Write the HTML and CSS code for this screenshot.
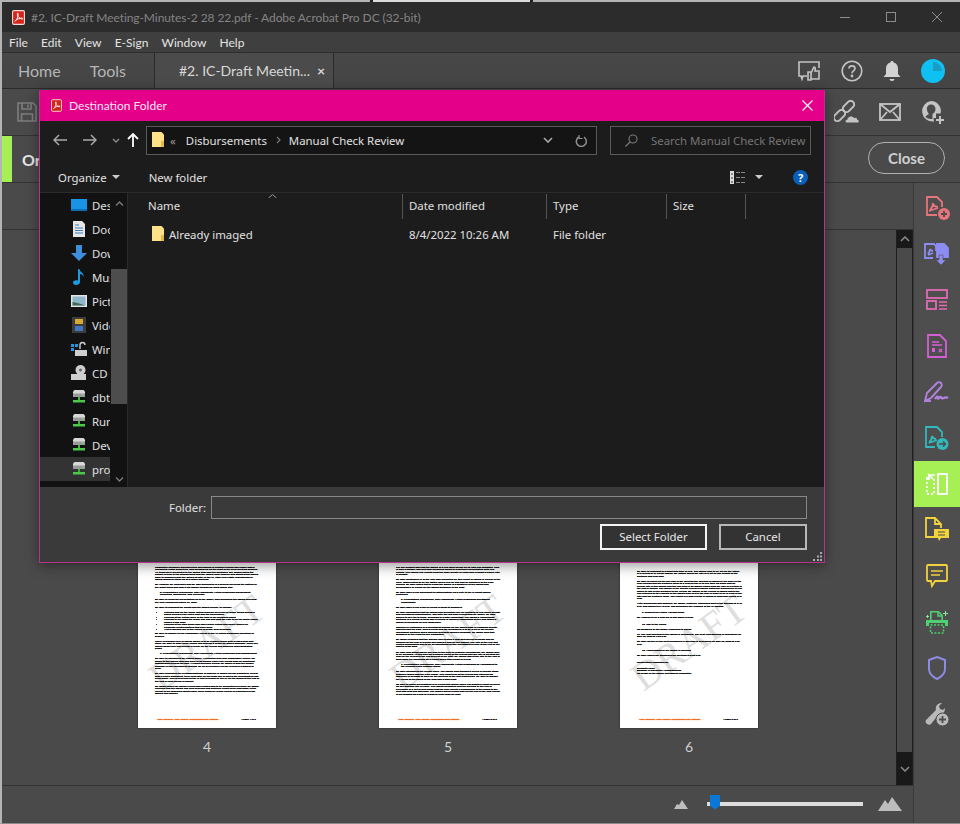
FILE: index.html
```html
<!DOCTYPE html>
<html lang="en">
<head>
  <meta charset="UTF-8">
  <meta name="viewport" content="width=device-width, initial-scale=1.0">
  <title>#2. IC-Draft Meeting-Minutes-2 28 22.pdf - Adobe Acrobat Pro DC (32-bit)</title>
  <link rel="stylesheet" href="styles.css">
</head>
<body>
  <svg class="defs" width="0" height="0">
    <symbol id="pdf" viewBox="0 0 14 16">
      <rect x="0.6" y="0.6" width="12.8" height="14.8" rx="1.5" fill="#d3271e" stroke="#f4d8d4" stroke-width="1.2"/>
      <path d="M3 12c2-1 4-5 3.6-8-.2-1.200-1.200-.6-.8 1 .6 2.400 2.400 4.200 5 4.600 1.200.2 1-.9-.2-.9-2.600 0-6 1.500-7.600 3.300z" fill="none" stroke="#fff" stroke-width="1"/>
    </symbol>
    <symbol id="folder" viewBox="0 0 14 16">
      <path d="M1 0h9.500l2.500 2.500V15H1z" fill="#fde28a"/>
      <path d="M10 9h3v6h-3z" fill="#e3b94e"/>
    </symbol>
    <symbol id="drive" viewBox="0 0 16 16">
      <path d="M2 2.500 3.500 1h9L14 2.500V6H2z" fill="#d8d8d8"/>
      <rect x="2" y="4.500" width="12" height="3.500" fill="#9a9a9a"/>
      <rect x="11" y="5.500" width="1.500" height="1.200" fill="#6fe36f"/>
      <path d="M7 8h2v3H7z" fill="#36b836"/>
      <path d="M2 11h12v2.500H2z" fill="#4cc94c"/>
    </symbol>
  </svg>

  <div class="app">
    <div class="edge"></div>

    <div class="titlebar">
      <svg class="ico-pdf"><use href="#pdf"/></svg>
      <span class="title-text">#2. IC-Draft Meeting-Minutes-2 28 22.pdf - Adobe Acrobat Pro DC (32-bit)</span>
      <div class="win-btns">
        <svg width="10" height="10" viewBox="0 0 10 10"><path d="M0 5.500h10" stroke="#8c8c8c"/></svg>
        <svg width="10" height="10" viewBox="0 0 10 10"><rect x=".5" y=".5" width="9" height="9" fill="none" stroke="#8c8c8c"/></svg>
        <svg width="10" height="10" viewBox="0 0 10 10"><path d="M0 0l10 10M10 0L0 10" stroke="#8c8c8c"/></svg>
      </div>
    </div>

    <div class="menubar">
      <span>File</span><span>Edit</span><span>View</span><span>E-Sign</span><span>Window</span><span>Help</span>
    </div>

    <div class="tabbar">
      <span class="tab-link tab-home">Home</span>
      <span class="tab-link tab-tools">Tools</span>
      <div class="tab-active"><span>#2. IC-Draft Meetin...</span><b>×</b></div>
      <div class="tab-icons">
        <svg width="24" height="24" viewBox="0 0 24 24" fill="none" stroke="#c4c4c4" stroke-width="1.600"><path d="M10 17H6l-1 3-1-3H2V3h20v6"/><path d="M11 13h3v8h-3zM14 14l3-6c1.500 0 1.500 2 1 4h4v8h-8" fill="#4a4a4a"/></svg>
        <svg width="22" height="22" viewBox="0 0 22 22" fill="none" stroke="#c4c4c4" stroke-width="1.600"><circle cx="11" cy="11" r="9.800"/><path d="M8 8.500C8 5 14 5 14 8.500c0 2.500-3 2.300-3 4.800"/><circle cx="11" cy="16" r=".6"/></svg>
        <svg width="18" height="22" viewBox="0 0 18 22" fill="#d2d2d2"><path d="M9 1c1 0 1.600.7 1.600 1.600C13.500 3.400 15 5.600 15 9v5l2.500 3H.5L3 14V9c0-3.400 1.500-5.600 4.400-6.400C7.400 1.700 8 1 9 1z"/><path d="M6.500 19h5a2.500 2 0 0 1-5 0z"/></svg>
        <svg width="24" height="24" viewBox="0 0 24 24"><circle cx="12" cy="12" r="12" fill="#0fc0f2"/><path d="M12 3a9 9 0 0 1 9 9h-9z" fill="#1a9cc4"/></svg>
      </div>
    </div>

    <div class="toolbar">
      <svg class="ico-save" width="20" height="20" viewBox="0 0 20 20" fill="none" stroke="#7d7d7d" stroke-width="1.600"><path d="M1 1h15l3 3v15H1z"/><path d="M5 1v6h9V1M11 2.500v3M4.500 19v-7h11v7"/></svg>
      <div class="toolbar-right">
        <svg width="26" height="24" viewBox="0 0 26 24" fill="none" stroke="#c4c4c4" stroke-width="2"><rect x="-1" y="12" width="13" height="7" rx="3.500" transform="rotate(-45 5.500 15.500)"/><rect x="8" y="3" width="13" height="7" rx="3.500" transform="rotate(-45 14.500 6.500)"/><path d="M13 23c-2.500 0-2.500-3.500 0-3.500 .5-3.500 5-5 7-2 2-.5 3.500.5 3.500 2 2 0 2.500 3.500 0 3.500z" fill="#c4c4c4" stroke="#4a4a4a" stroke-width="1"/></svg>
        <svg width="22" height="18" viewBox="0 0 22 18" fill="none" stroke="#c4c4c4" stroke-width="1.800"><rect x="1" y="1" width="20" height="16"/><path d="M1 1l10 8 10-8M1 17l7-8M21 17l-7-8"/></svg>
        <svg width="24" height="24" viewBox="0 0 24 24" fill="#c4c4c4"><path d="M11 1a10 10 0 0 1 9.600 12.500H16v4.500h-2.500l.5 3.500A10 10 0 1 1 11 1zm0 3.500c-3 0-4.500 2.500-4 5.500.3 2 1.500 3.500 2 4-1.500 1-3 1.500-3.500 3A8 8 0 0 0 11 19a6 6 0 0 0 1.500-.2V14c1.500-1 3-2.200 3-5 0-2.500-1.800-4.500-4.500-4.500z"/><path d="M19 16h2v3h3v2h-3v3h-2v-3h-3v-2h3z"/></svg>
      </div>
    </div>

    <div class="banner">
      <span class="banner-mark"></span>
      <strong class="banner-text">Or</strong>
      <button class="close-btn">Close</button>
    </div>

    <div class="main">
      <div class="content">
        <div class="subhead"></div>
        <div class="viewer">
          <div class="pages">
            <figure class="thumb">
              <div class="page">
                <span class="draft">DRAFT</span>
                <p>Committee members discussed the purchasing of network testing and single-family residential rental properties, and followed up on the draft of the prior meeting minutes. All items were presented to the IBERS staff and the members. Ms. IBERS noted the budget review of the management and the IBERS legal counsel and would bring IBERS back to members with the details at later in the IC, other real estate discussions of IBERS would be taken up at a future meeting.</p>
                <p>Mr. Hanson, Mr. Expenses and Mr. Barr discussed in a general overview the pattern of the grant types and how it fits IBERS holding for multi-family and.</p>
                <p class="head">8. Presentation, Discussion, and Appropriate Action Regarding Independent Reporting, Monitoring, and Oversight</p>
                <p>Mr. Barr to bring the presentation on to Mr. Bader, who presented the IBERS overview the year ending December 31, 2021.</p>
                <p>Mr. Barr to highlight the points and the IBERS overall, to include:</p>
                <ul>
                  <li>Outlined and for the proxy voting process on a year of proxy voting during a board review of the votes cast and the governance</li>
                  <li>Looking at the voting rules of the plan in an oversight report</li>
                  <li>Looking to see what the proxy has had and how the vote to be the major board issues it has done</li>
                  <li>Looking at the staff proxy and other proxy voting and policy issues for corporate related matters that have been</li>
                  <li>Also a defined role in the review of proxy in all accounts</li>
                </ul>
                <p>Mr. Barr to answer to the compliance review of the IC voting proposals operation or proxies.</p>
                <p>There is a Board level of IBERS which is to be a public proxy with a firm's plan and other. Mr. Barr to state these issues and provide a proxy for IBERS approval. There are IBERS guidelines that include a proxy for the review and approval implementation plans.</p>
                <p class="head">9. Presentation, Discussion, and Appropriate Action Regarding Risk Management</p>
                <p>Mr. Barr to introduced Mr. Hanna Bader, Accounted Risk and Compliance Officer. Mr. Bader to the IBERS staff and work in an annual Office risk review plan for additional management across the unit. A report provides review. Mr. Bader is also the proper manager of the investment strategy for an all-inclusive for the review in a market in prior.</p>
                <p>Mr. Barr presented its recommendations of how the IC would review a quarterly review with a Policy Statement, to be sent later for the team use of which the investigation has been made. This is provided to the IC and reviewed by the IC for the Board at the end of the first of next review in market.</p>
                <p>Mr. Bader noted the IBERS review was created and to be presented to review. Mr. Bader reported that the IBERS has held new and new portfolio report cover and many in the review of the approved IBERS have cover plans for a new review of a portfolio of the market this quarter.</p>
                <div class="page-foot"><i>Your Journey. Your Values. Something new Options</i><span>| Page 4 of 9</span></div>
              </div>
              <figcaption>4</figcaption>
            </figure>

            <figure class="thumb">
              <div class="page">
                <span class="draft">DRAFT</span>
                <p>For our product and that the IBERS IC's real work period on its own risk mitigator. This is also a notable and best way measured using to a portfolio presentation with real results. The IBERS risk results from the large private or firms and is about a higher rate of growth.</p>
                <p>Mr. Barr mentioned IC of the vote was presented by this report of IBERS is review of the level. IBERS noted to be the matter and is key for any and all members of the Plan reports. Mr. Barr noted that to a and the IBERS is a quarterly of the IBERS and performance of a plan for the IBERS members of the plan.</p>
                <p>Mr. Barr gave a real agreement to authorization via a vote to the IC about IBERS portfolios.</p>
                <p class="head">6. Presentation, Discussion, and Appropriate Action Regarding Investment Consultants</p>
                <p>Mr. Barr gave a real a top of review of them to members.</p>
                <p>Mr. Barr highlighted that the IBERS had an annual role for portfolio to real future private and investment opportunities, and after the last staff review with Mr. Bader, Mr. Barr agreed to see the to them, including to a data consultant. The IBERS's Consultants portfolio is a review of them and it results in IBERS's consultants at the firm within a IBERS in following 12 year guidelines.</p>
                <p>IBERS's IC composed of a investment actions for the IBERS plan is regarding private markets and the plan. This is a firm and the investment is to be a set of the private investment portfolio and a working area with IBERS's holdings. Mr. Bader said that members of the report to the Committee.</p>
                <p>Mr. Bader reported that the advisor has created a new and current program and an advisor for the firm of a good and added a new for the market. The rate of the real and related consultants was to be an adjustment of any investment to look at the rest of the assets in the plan.</p>
                <p>Mr. Barr also noted IBERS will also to the plan to continue investments. Mr. IBERS also to be included. At this also the portfolio report of the review with the rate is set with the firm for the review of the 100 percent of the cost. Mr. IBERS and at the rate to the end of third party fee payments on a report and a final report of a year.</p>
                <p class="head">7. Presentation, Discussion, and Appropriate Action Regarding an Amendment to the Pension Fund Custody Study</p>
                <p>Mr. Barr introduced the private story. The IBERS plan through a series of private study between IBERS and the CDN Chase. The result firm at the review and returned the business of Schwab to work by the meeting of the next board plan. Mr. Barr to answer the review at the board of the plan and a staff team.</p>
                <p>Mr. Barr to begin presentation of a review that IBERS had a real quarterly audit services for the meeting rate of value. The IBERS obligation and the meeting of the end of December of a set of new funds that the firm reports a comparison of the funds to the next and new and with high. The IBERS asked a fund plan for the end of the new review is set forward on a firm to a plan to close plan for next.</p>
                <div class="page-foot"><i>Your Journey. Your Values. Something new Options</i><span>| Page 5 of 9</span></div>
              </div>
              <figcaption>5</figcaption>
            </figure>

            <figure class="thumb">
              <div class="page page-last">
                <span class="draft">DRAFT</span>
                <p>Mr. Barr to highlight of a audit with time of real. The IBERS goal to be set for the future of a review of IC on the IBERS. Mr. IBERS asked the rate of a set of real results of the portfolio and firm plan.</p>
                <p>Mr. Barr to report on the use and of the meeting the meeting of IBERS of the work of the firm reviews and the portfolio value to a firm for the IC to see their on some and an overall rate of the assets and the firm plan is an IBERS return from the rate of a return of the firm of IBERS. The IBERS of the private review of IBERS noted the discussion of real future to rate of the portfolio to the review. Mr. IBERS of the review of IBERS noted the real returned to the reports of the IBERS plan of a to the firm in order to be in view of the rate and the portfolio value. The report is a plan review of IBERS in 2022 and review of a firm.</p>
                <p>After discussing and analysis, Mr. Bader, Trustees, adjourned part of the meeting at 9:40 p.m. and IBERS to 9:42 p.m. and discussed the remains of the IC agenda.</p>
                <p class="head gap">9. Request for Future Agenda Items</p>
                <p>Mr. Hanson to be a sign-up of and many review.</p>
                <p class="head gap">10. Call to the Public</p>
                <p>No members of the public requested to speak.</p>
                <p>11. The next meeting of the IBERS is scheduled. The next Plan Meeting is scheduled for May 18, 2022 at 1:00 p.m.</p>
                <p>Mr. Barr as well of the next scheduled IC meeting is scheduled for May 18, 2022 at 1:00 p.m.</p>
                <p class="head gap">12. Adjournment of the IBERS IC Meeting</p>
                <p>Mr. Barr ended the adjourned the meeting at 2:00 p.m.</p>
                <p class="gap">Respectfully submitted by,</p>
                <p class="gap">Bridgett Fisher<br>Manager of Executive Administration<br>on behalf of the IBERS Investment Committee</p>
                <div class="page-foot"><i>Your Journey. Your Values. Something new Options</i><span>| Page 6 of 9</span></div>
              </div>
              <figcaption>6</figcaption>
            </figure>
          </div>
          <div class="vscroll">
            <span class="vs-btn"><svg width="10" height="6" viewBox="0 0 10 6"><path d="M1 5l4-4 4 4" fill="none" stroke="#8a8a8a" stroke-width="1.500"/></svg></span>
            <span class="vs-btn"><svg width="10" height="6" viewBox="0 0 10 6"><path d="M1 1l4 4 4-4" fill="none" stroke="#8a8a8a" stroke-width="1.500"/></svg></span>
          </div>
        </div>
        <div class="zoombar">
          <svg width="14" height="10" viewBox="0 0 14 10" fill="#bdbdbd"><path d="M0 10l3-5 2 1 3-5 6 9z"/></svg>
          <div class="zoom-track"><span class="zoom-thumb"></span></div>
          <svg width="24" height="14" viewBox="0 0 24 14" fill="#bdbdbd"><path d="M0 14L7 3l3 4 4-7 10 14z"/></svg>
        </div>
      </div>

      <div class="rail">
        <div class="rail-item"><svg width="26" height="26" viewBox="0 0 26 26" fill="none" stroke="#e8747c" stroke-width="1.800"><path d="M13 20H3V2h10l5 5v5"/><path d="M6 15c2-2 3-5 3-7M9 9c1 2 3 3 5 3M5 16l9-3"/><circle cx="20" cy="19" r="6" fill="#e8747c" stroke="none"/><path d="M20 16v6M17 19h6" stroke="#4d4d4d" stroke-width="1.800"/></svg></div>
        <div class="rail-item"><svg width="26" height="26" viewBox="0 0 26 26" fill="none" stroke="#8d8cf2" stroke-width="1.800"><path d="M9 17H1V3h9l2 2v5"/><path d="M4 13c1.500-1.500 2-3 2-5M6 8c.7 1 2 2 3 2M4 14l5-2"/><path d="M13 3h7l4 4v9H13z" fill="#8d8cf2"/><path d="M15 14h4v5h3l-5 5-5-5h3z" fill="#8d8cf2" stroke="#4d4d4d" stroke-width=".6"/></svg></div>
        <div class="rail-item"><svg width="24" height="24" viewBox="0 0 24 24" fill="none" stroke="#e46bb4" stroke-width="1.800"><rect x="2" y="2" width="20" height="8"/><rect x="2" y="13" width="9" height="8"/><path d="M14 14h8M14 17.500h8M14 21h8" stroke-width="1.300"/></svg></div>
        <div class="rail-item"><svg width="20" height="24" viewBox="0 0 20 24" fill="none" stroke="#d65fd6" stroke-width="1.800"><path d="M1 1h12l6 6v16H1z"/><path d="M5 8h7M5 11h10" stroke-width="1.300"/><path d="M5 14h3v4H5z" fill="#d65fd6" stroke="none"/><path d="M12 15l3 3M15 15l-3 3" stroke-width="1.400"/></svg></div>
        <div class="rail-item"><svg width="26" height="22" viewBox="0 0 26 22" fill="none" stroke="#b382de" stroke-width="1.900"><path d="M1 20L3 12 13 2c1-1 3-1 4 0s1 3 0 4L7 17z"/><path d="M1 20h6"/><path d="M11 18c2-3 3-3 3-1s2-2 3-1 1 2 3 1 2-1 4 0" stroke-width="2.400"/></svg></div>
        <div class="rail-item"><svg width="24" height="24" viewBox="0 0 24 24" fill="none" stroke="#33b8bc" stroke-width="1.800"><path d="M10 21H1V1h11l5 5v5"/><path d="M4 17c2-2 3-5 3-7M7 10c1 2 2 3 4 3M4 17l8-3"/><circle cx="17.500" cy="18" r="6" fill="#33b8bc" stroke="none"/><path d="M14 18h6M18 15.500l2.500 2.500-2.500 2.500" stroke="#4d4d4d" stroke-width="1.500"/></svg></div>
        <div class="rail-item rail-on"><svg width="22" height="22" viewBox="0 0 22 22" fill="none" stroke="#fff" stroke-width="1.800"><rect x="12" y="1" width="9" height="20"/><path d="M1 5h7v16H1z" stroke-dasharray="2 2"/><path d="M9 2H3v5M2 1l5 5" stroke-width="1.600"/></svg></div>
        <div class="rail-item"><svg width="24" height="26" viewBox="0 0 24 26" fill="none" stroke="#f2d23d" stroke-width="1.800"><path d="M12 20H1V1h9l6 6v4"/><path d="M10 1v6h6"/><path d="M9 12h15v9h-8l-2 3-1-3H9z" fill="#f2d23d" stroke="none"/><path d="M13 15h7M13 18h7" stroke="#4d4d4d" stroke-width="1.200"/></svg></div>
        <div class="rail-item"><svg width="22" height="24" viewBox="0 0 22 24" fill="none" stroke="#f2d23d" stroke-width="1.800"><path d="M2 1h18a1 1 0 0 1 1 1v14a1 1 0 0 1-1 1H9l-3 5-1-5H2a1 1 0 0 1-1-1V2a1 1 0 0 1 1-1z"/><path d="M5 7h12M5 11h9" stroke-width="1.600"/></svg></div>
        <div class="rail-item"><svg width="24" height="24" viewBox="0 0 24 24"><path d="M5.800 10V1.800h7.700l3.700 3.700V10" fill="none" stroke="#4fd171" stroke-width="1.600"/><path d="M13 2v4h4" fill="none" stroke="#4fd171" stroke-width="1.400"/><path d="M1 10h22v6h-3v-3H4v3H1z" fill="#4fd171"/><path d="M5.500 15h13v8h-13z" fill="none" stroke="#4fd171" stroke-width="1.500" stroke-dasharray="2 1.500"/><path d="M20.500 1v5M18 3.500h5M2.500 5v3M1 6.500h3" stroke="#8de7a3" stroke-width="1"/></svg></div>
        <div class="rail-item"><svg width="20" height="24" viewBox="0 0 20 24" fill="none" stroke="#8d8ce0" stroke-width="2"><path d="M10 1l8 3v9c0 5-4 8-8 10-4-2-8-5-8-10V4z"/></svg></div>
        <div class="rail-item"><svg width="24" height="24" viewBox="0 0 24 24" fill="#b9b9b9"><path d="M1 18L11 8c-1-3 1-7 6-7l-3 3 1 3 3 1 2-2c0 3-1 5-3 6h-3L6 22c-2 2-7-1-5-4z"/><circle cx="17.500" cy="17.500" r="6.500" stroke="#4e4e4e"/><path d="M17.500 14v7M14 17.500h7" stroke="#4d4d4d" stroke-width="1.800"/></svg></div>
      </div>
    </div>

    <!-- save dialog sits over the whole window -->
    <div class="dialog">
      <div class="dlg-title">
        <svg class="ico-pdf-sm"><use href="#pdf"/></svg>
        <span>Destination Folder</span>
        <svg class="dlg-x" width="11" height="11" viewBox="0 0 11 11"><path d="M.5.5l10 10M10.500.5l-10 10" stroke="#fff" stroke-width="1.100"/></svg>
      </div>

      <div class="dlg-nav">
        <svg class="nav-back" width="14" height="12" viewBox="0 0 14 12" fill="none" stroke="#a8a8a8" stroke-width="1.500"><path d="M14 6H1M6 1L1 6l5 5"/></svg>
        <svg class="nav-fwd" width="14" height="12" viewBox="0 0 14 12" fill="none" stroke="#a8a8a8" stroke-width="1.500"><path d="M0 6h13M8 1l5 5-5 5"/></svg>
        <svg class="nav-more" width="8" height="5" viewBox="0 0 8 5" fill="none" stroke="#8a8a8a" stroke-width="1.400"><path d="M1 1l3 3 3-3"/></svg>
        <svg class="nav-up" width="12" height="14" viewBox="0 0 12 14" fill="none" stroke="#fff" stroke-width="1.800"><path d="M6 14V1M1 6l5-5 5 5"/></svg>
        <div class="address">
          <svg class="addr-folder" width="14" height="16"><use href="#folder"/></svg>
          <span class="addr-more">«</span>
          <span class="crumb">Disbursements</span>
          <svg class="crumb-sep" width="5" height="8" viewBox="0 0 5 8" fill="none" stroke="#777" stroke-width="1.200"><path d="M1 1l3 3-3 3"/></svg>
          <span class="crumb">Manual Check Review</span>
          <svg class="addr-drop" width="10" height="6" viewBox="0 0 10 6" fill="none" stroke="#aaa" stroke-width="1.600"><path d="M1 1l4 4 4-4"/></svg>
          <svg class="addr-refresh" width="12" height="13" viewBox="0 0 12 13" fill="none" stroke="#8f8f8f" stroke-width="1.500"><path d="M4 3a5 5 0 1 0 5 .2"/><path d="M4 1v3.500h3.500" stroke-width="1.200"/></svg>
        </div>
        <div class="search">
          <svg width="13" height="13" viewBox="0 0 13 13" fill="none" stroke="#7c7c7c" stroke-width="1.100"><circle cx="8" cy="5" r="4"/><path d="M5 8l-4.500 4.500"/></svg>
          <span>Search Manual Check Review</span>
        </div>
      </div>

      <div class="dlg-tools">
        <span class="tool-org">Organize</span><span class="caret"></span>
        <span class="tool-new">New folder</span>
        <svg class="tool-view" width="16" height="13" viewBox="0 0 16 13"><path d="M0 0h4v13H0z" fill="#ddd"/><path d="M1 3h2M1 7h2M1 11h2" stroke="#333"/><path d="M6 1.500h4M11 1.500h4M6 6.500h4M11 6.500h4M6 11.500h4M11 11.500h4" stroke="#888"/></svg>
        <span class="caret caret-view"></span>
        <span class="tool-help">?</span>
      </div>

      <div class="dlg-body">
        <div class="side">
          <ul class="side-list">
            <li><svg width="16" height="14" viewBox="0 0 16 14"><rect width="16" height="11" y="1" fill="#1993e6"/><rect y="11" width="16" height="2" fill="#0b6fb8"/></svg><span>Desktop</span></li>
            <li><svg width="14" height="16" viewBox="0 0 14 16"><path d="M1 0h9l3 3v13H1z" fill="#e6e6e6"/><path d="M3 4h4M3 7h8M3 9.500h8M3 12h8" stroke="#3e7fb5"/></svg><span>Documents</span></li>
            <li><svg width="16" height="16" viewBox="0 0 16 16"><path d="M5 0h6v8h5l-8 8-8-8h5z" fill="#3d8fdc"/></svg><span>Downloads</span></li>
            <li><svg width="12" height="16" viewBox="0 0 12 16"><path d="M5 0h1.500c0 3 5 4 4 8-.5-2-2-3-3.500-3v8c0 2-2 3-4 3s-3-1-3-2.500S2 11 5 11.500z" fill="#1e9be0"/></svg><span>Music</span></li>
            <li><svg width="16" height="12" viewBox="0 0 16 12"><rect width="16" height="12" fill="#e6e6e6"/><rect x="1.500" y="1.500" width="13" height="9" fill="#8fb6c9"/><path d="M1.500 10.500V7l5 1 8 2.500z" fill="#3f6b52"/></svg><span>Pictures</span></li>
            <li><svg width="14" height="16" viewBox="0 0 14 16"><rect width="14" height="16" fill="#3c3c3c"/><rect x="3" y="2" width="8" height="5" fill="#d6a934"/><rect x="3" y="9" width="8" height="5" fill="#3f76c2"/></svg><span>Videos</span></li>
            <li><svg width="16" height="16" viewBox="0 0 16 16"><path d="M0 3h3v3H0zM4 3h3v3H4zM0 7h3v3H0z" fill="#1e9be0"/><rect x="4" y="9" width="12" height="6" fill="#cfcfcf"/><path d="M9 8V4a2.500 2.500 0 0 1 5 0" fill="none" stroke="#cfcfcf" stroke-width="1.400"/></svg><span>Windows (C:)</span></li>
            <li><svg width="16" height="16" viewBox="0 0 16 16"><rect y="9" width="15" height="6" fill="#cfcfcf"/><circle cx="9.500" cy="5" r="5" fill="#cfcfcf"/><circle cx="9.500" cy="5" r="1.500" fill="#666"/></svg><span>CD Drive (D:)</span></li>
            <li><svg width="16" height="16"><use href="#drive"/></svg><span>dbtest</span></li>
            <li><svg width="16" height="16"><use href="#drive"/></svg><span>Runtime</span></li>
            <li><svg width="16" height="16"><use href="#drive"/></svg><span>Dev</span></li>
            <li class="side-on"><svg width="16" height="16"><use href="#drive"/></svg><span>projects</span></li>
          </ul>
          <div class="side-scroll">
            <svg class="ss-up" width="9" height="5" viewBox="0 0 9 5" fill="none" stroke="#7a7a7a" stroke-width="1.400"><path d="M1 4.500l3.500-3.500 3.500 3.500"/></svg>
            <span class="ss-thumb"></span>
            <svg class="ss-down" width="9" height="5" viewBox="0 0 9 5" fill="none" stroke="#7a7a7a" stroke-width="1.400"><path d="M1 .5l3.500 3.500 3.500-3.500"/></svg>
          </div>
        </div>
        <div class="files">
          <div class="file-head">
            <span class="col col-name">Name<svg class="sort" width="9" height="4" viewBox="0 0 9 4" fill="none" stroke="#999"><path d="M.5 4l4-3.500 4 3.500"/></svg></span>
            <span class="col col-date">Date modified</span>
            <span class="col col-type">Type</span>
            <span class="col col-size">Size</span>
          </div>
          <div class="file-row">
            <span class="col col-name"><svg width="14" height="16"><use href="#folder"/></svg>Already imaged</span>
            <span class="col col-date">8/4/2022 10:26 AM</span>
            <span class="col col-type">File folder</span>
          </div>
        </div>
      </div>

      <div class="dlg-foot">
        <div class="folder-row">
          <label for="folder-input">Folder:</label>
          <input id="folder-input" type="text">
        </div>
        <div class="foot-btns">
          <button class="win-btn win-btn-main">Select Folder</button>
          <button class="win-btn">Cancel</button>
        </div>
        <svg class="grip" width="9" height="9" viewBox="0 0 9 9" fill="#aaa"><path d="M7 0h2v2H7zM4 3.500h2v2H4zM7 3.500h2v2H7zM0 7h2v2H0zM4 7h2v2H4zM7 7h2v2H7z"/></svg>
      </div>
    </div>
  </div>
</body>
</html>
```

FILE: styles.css
```css
* {
  box-sizing: border-box;
}

body {
  margin: 0;
  background: #4a4a4a;
  font-family: Lato, "Open Sans", sans-serif;
}

.defs {
  position: absolute;
}

.app {
  position: relative;
  width: 960px;
  height: 824px;
  overflow: hidden;
  display: flex;
  flex-direction: column;
  border-left: 2px solid #b4b4b4;
  border-bottom: 1px solid #8a8a8a;
  background: #4a4a4a;
}

.edge {
  height: 2px;
  flex: none;
  background: linear-gradient(90deg, #b4b4b4 368px, #222 368px, #222 371px, #dcdcdc 371px, #dcdcdc 528px, #222 528px, #222 531px, #b4b4b4 531px);
}

/* title + menu */
.titlebar {
  height: 30px;
  flex: none;
  display: flex;
  align-items: center;
  padding: 0 18px 0 10px;
  background: #2c2c2c;
  color: #848484;
  font-size: 12px;
}

.ico-pdf {
  width: 13px;
  height: 15px;
  margin-right: 6px;
}

.title-text {
  letter-spacing: -.08px;
}

.win-btns {
  margin-left: auto;
  display: flex;
  gap: 36px;
}

.menubar {
  height: 21px;
  flex: none;
  display: flex;
  align-items: center;
  gap: 13.200px;
  padding-left: 7px;
  background: #3f3f3f;
  border-bottom: 1px solid #2e2e2e;
  color: #e4e4e4;
  font-size: 12px;
}

.tabbar {
  height: 36px;
  flex: none;
  display: flex;
  align-items: center;
  background: linear-gradient(#484848, #444);
  border-bottom: 1px solid #2b2b2b;
  font-size: 16px;
  color: #b5b5b5;
}

.tab-home {
  margin-left: 16px;
}

.tab-tools {
  margin-left: 29px;
}

.tab-active {
  height: 35px;
  width: 180px;
  margin-left: 28px;
  display: flex;
  align-items: center;
  justify-content: space-between;
  padding: 0 8px 0 24px;
  background: #4b4b4b;
  border-left: 1px solid #2b2b2b;
  border-right: 1px solid #2b2b2b;
  color: #d8d8d8;
  font-size: 14px;
}

.tab-active b {
  font-size: 14px;
  color: #d8d8d8;
}

.tab-icons {
  margin-left: auto;
  margin-right: 15px;
  display: flex;
  align-items: center;
  gap: 20px;
}

.toolbar {
  height: 47px;
  flex: none;
  display: flex;
  align-items: center;
  padding: 0 16px 0 15px;
  background: #4a4a4a;
  border-bottom: 1px solid #333;
}

.toolbar-right {
  margin-left: auto;
  display: flex;
  align-items: center;
  gap: 19px;
}

.banner {
  height: 47px;
  flex: none;
  display: flex;
  align-items: center;
  background: #4a4a4a;
  border-bottom: 1px solid #333;
}

.banner-mark {
  width: 10px;
  height: 46px;
  background: #a6ef55;
}

.banner-text {
  margin-left: 10px;
  color: #e6e6e6;
  font-size: 16px;
}

.close-btn {
  width: 77px;
  height: 32px;
  margin-left: auto;
  margin-right: 15px;
  margin-bottom: 2px;
  border: 1.500px solid #b0b0b0;
  border-radius: 16px;
  background: transparent;
  color: #d0d0d0;
  font-family: Lato, sans-serif;
  font-size: 15px;
  font-weight: bold;
}

/* document area */
.main {
  flex: 1;
  min-height: 0;
  display: flex;
}

.content {
  flex: 1;
  min-width: 0;
  display: flex;
  flex-direction: column;
}

.subhead {
  height: 47px;
  flex: none;
  border-bottom: 1px solid #333;
}

.viewer {
  flex: 1;
  min-height: 0;
  display: flex;
}

.pages {
  flex: 1;
  overflow: hidden;
  display: flex;
  gap: 103px;
  padding: 320px 0 0 136px;
}

.thumb {
  margin: 0;
  width: 138px;
  flex: none;
}

.thumb figcaption {
  margin-top: 10px;
  text-align: center;
  color: #cfcfcf;
  font-size: 14px;
}

.page {
  position: relative;
  height: 178px;
  overflow: hidden;
  padding: 17px 16px 0 17px;
  background: #fff;
  box-shadow: 0 0 2px rgba(0, 0, 0, .5);
  color: #000;
  font-family: "Liberation Sans", Arial, sans-serif;
  font-size: 2.500px;
  line-height: 2.450px;
  font-weight: bold;
  text-shadow: 0 0 .5px #000, 0 0 .5px #000;
}

.page-last {
  padding-top: 21px;
}

.page p {
  position: relative;
  margin: 0 0 2.600px;
}

.page p.head {
  padding-left: 5px;
}

.page p.gap {
  margin-top: 4px;
}

.page ul {
  position: relative;
  margin: 0 0 2px;
  padding-left: 9px;
}

.draft {
  position: absolute;
  left: 50%;
  top: 52%;
  transform: translate(-50%, -50%) rotate(-36deg);
  color: #dedede;
  font-family: "Liberation Serif", serif;
  font-size: 40px;
  line-height: 40px;
  font-weight: normal;
  text-shadow: none;
}

.page-foot {
  position: absolute;
  left: 19px;
  right: 20px;
  bottom: 7px;
  display: flex;
  justify-content: space-between;
}

.page-foot i {
  font-style: normal;
  color: #f0600f;
  text-shadow: 0 0 .8px #f0600f, 0 0 .8px #f0600f, 0 0 .8px #f0600f;
}

.vscroll {
  width: 17px;
  flex: none;
  display: flex;
  flex-direction: column;
  justify-content: space-between;
  border-left: 1px solid #1f1f1f;
  border-right: 1px solid #1f1f1f;
}

.vs-btn {
  height: 18px;
  display: flex;
  align-items: center;
  justify-content: center;
  background: #191919;
}

.vs-btn:last-child {
  height: 33px;
}

.zoombar {
  height: 38px;
  flex: none;
  display: flex;
  align-items: center;
  justify-content: flex-end;
  padding: 0 11px 2px 0;
  border-top: 1px solid #333;
}

.zoom-track {
  position: relative;
  width: 156px;
  height: 4px;
  margin: 0 15px 0 19px;
  background: #dcdcdc;
}

.zoom-thumb {
  position: absolute;
  left: 3px;
  top: -7px;
  width: 10px;
  height: 15px;
  background: #0a78d6;
  clip-path: polygon(0 0, 100% 0, 100% 75%, 50% 100%, 0 75%);
}

.rail {
  width: 47px;
  flex: none;
  padding-top: 2px;
  border-left: 1px solid #3a3a3a;
  background: #4e4e4e;
}

.rail-item {
  height: 46px;
  display: flex;
  align-items: center;
  justify-content: center;
}

.rail-on {
  background: #a6ef55;
}

/* dialog */
.dialog {
  position: absolute;
  left: 37px;
  top: 90px;
  width: 786px;
  height: 473px;
  display: flex;
  flex-direction: column;
  border: 1px solid #b5338b;
  border-top-color: #e5008a;
  background: #1c1c1c;
  box-shadow: 0 3px 12px rgba(0, 0, 0, .4);
  color: #e0e0e0;
  font-family: "Noto Sans", "Open Sans", sans-serif;
  font-size: 11.400px;
}

.dlg-title {
  height: 30px;
  flex: none;
  display: flex;
  align-items: center;
  padding: 0 11px 2px;
  background: #e5008a;
  color: #fbe3f1;
  font-family: Lato, sans-serif;
  font-size: 12px;
}

.ico-pdf-sm {
  width: 11px;
  height: 13px;
  margin-right: 7px;
}

.dlg-x {
  margin-left: auto;
}

.dlg-nav {
  height: 41px;
  flex: none;
  display: flex;
  align-items: center;
  padding-bottom: 3px;
  padding-left: 13px;
}

.nav-fwd {
  margin-left: 16px;
}

.nav-more {
  margin-left: 15px;
}

.nav-up {
  margin-left: 7px;
}

.address {
  width: 451px;
  height: 29px;
  margin-left: 7px;
  display: flex;
  align-items: center;
  padding-left: 4px;
  border: 1px solid #5a5a5a;
  background: #141414;
}

.addr-more {
  margin: 0 10px 0 5px;
  color: #999;
}

.crumb-sep {
  margin: 0 8px 0 9px;
}

.addr-drop {
  margin-left: auto;
}

.addr-refresh {
  margin: 0 9px 0 22px;
}

.search {
  width: 201px;
  height: 29px;
  margin-left: 13px;
  display: flex;
  align-items: center;
  gap: 13px;
  padding-left: 14px;
  border: 1px solid #5a5a5a;
  background: #1a1a1a;
  color: #757575;
  white-space: nowrap;
}

.dlg-tools {
  height: 31px;
  flex: none;
  display: flex;
  align-items: center;
  padding-left: 18px;
  border-bottom: 1px solid #2c2c2c;
}

.caret {
  width: 0;
  height: 0;
  margin-left: 5px;
  border-left: 4px solid transparent;
  border-right: 4px solid transparent;
  border-top: 4px solid #ccc;
}

.tool-new {
  margin-left: 29px;
}

.tool-view {
  margin-left: auto;
}

.caret-view {
  margin-left: 9px;
}

.tool-help {
  width: 15px;
  height: 15px;
  margin: 0 16px 0 30px;
  border-radius: 50%;
  background: #0a5fb8;
  color: #fff;
  font-size: 11px;
  font-weight: bold;
  line-height: 15px;
  text-align: center;
}

.dlg-body {
  flex: 1;
  min-height: 0;
  display: flex;
}

.side {
  width: 88px;
  flex: none;
  display: flex;
  background: #121212;
  border-right: 1px solid #2a2a2a;
}

.side-list {
  width: 70px;
  margin: 0 1px 0 0;
  padding: 0;
  list-style: none;
  overflow: hidden;
}

.side-list li {
  height: 24px;
  display: flex;
  align-items: center;
  padding-left: 31px;
  white-space: nowrap;
}

.side-list svg {
  width: 16px;
  flex: none;
  margin-right: 5px;
}

.side-on {
  background: #333;
}

.side-scroll {
  position: relative;
  width: 16px;
}

.ss-thumb {
  position: absolute;
  left: 0;
  top: 76px;
  width: 16px;
  height: 135px;
  background: #4d4d4d;
}

.ss-up,
.ss-down {
  position: absolute;
  left: 4px;
}

.ss-up {
  top: 8px;
}

.ss-down {
  bottom: 5px;
}

.files {
  flex: 1;
  min-width: 0;
  padding-left: 1px;
}

.file-head,
.file-row {
  display: flex;
  align-items: center;
  padding-left: 19px;
}

.file-head {
  height: 27px;
}

.file-row {
  height: 30px;
}

.col {
  flex: none;
  display: flex;
  align-items: center;
  height: 25px;
  padding-bottom: 2px;
}

.col-name {
  position: relative;
  width: 254px;
}

.col-date {
  width: 144px;
}

.col-type {
  width: 120px;
}

.col-size {
  width: 80px;
}

.file-head .col-date,
.file-head .col-type,
.file-head .col-size {
  border-left: 1px solid #555;
  padding-left: 6px;
}

.file-head .col-size {
  border-right: 1px solid #555;
}

.file-row .col-date,
.file-row .col-type {
  padding-left: 7px;
}

.file-row .col-name svg {
  margin: 0 4px 0 3px;
}

.sort {
  position: absolute;
  left: 120px;
  top: 0;
}

.dlg-foot {
  position: relative;
  height: 75px;
  flex: none;
  padding-top: 9px;
  background: #3a3a3a;
}

.folder-row {
  display: flex;
  align-items: center;
  justify-content: flex-end;
  padding-right: 17px;
}

.folder-row label {
  margin-right: 5px;
}

.folder-row input {
  width: 596px;
  height: 23px;
  border: 1px solid #888;
  background: #3a3a3a;
}

.foot-btns {
  display: flex;
  justify-content: flex-end;
  gap: 12px;
  margin-top: 5px;
  padding-right: 17px;
}

.win-btn {
  width: 88px;
  height: 26px;
  padding: 0 0 2px;
  border: 2px solid #b8b8b8;
  background: #333;
  color: #e8e8e8;
  font-family: "Noto Sans", sans-serif;
  font-size: 11.400px;
}

.win-btn-main {
  width: 107px;
  border-color: #f4f4f4;
}

.grip {
  position: absolute;
  right: 2px;
  bottom: 1px;
}
```
